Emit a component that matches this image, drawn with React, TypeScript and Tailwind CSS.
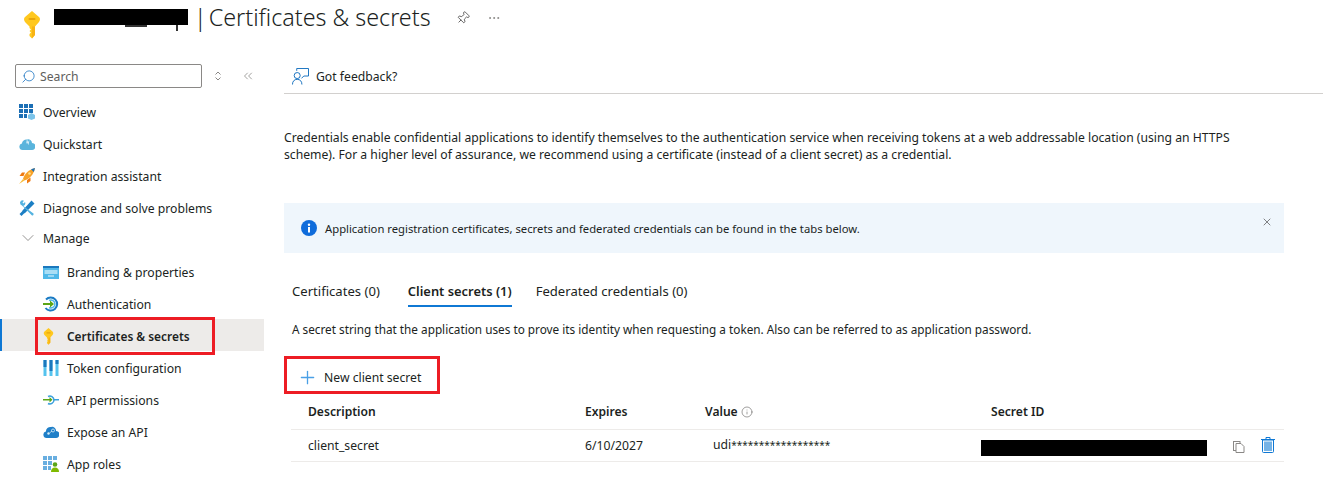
import { ChevronDown, ChevronsLeft, Ellipsis, Info, Pin, Plus, Search, X } from "lucide-react";
import type { ReactNode } from "react";

const KeyIcon = ({ className }: { className?: string }) => (
    <svg viewBox="0 0 18 28" className={className}>
        <path d="M9 0 L16 6 Q18 8 16 11 L12 15.5 V24 L9 27.5 L6.5 25 V23 L8 21.5 L6.5 20 L8 18.5 L6.5 17 V15.5 L2 11 Q0 8 2 6 Z" fill="#ffc81f" />
        <path d="M12 15.500V24L9 27.500V15.500Z" fill="#f5a90f" opacity="0.7" />
        <rect x="5.500" y="7" width="7" height="2" rx="1" fill="#e8a50c" />
    </svg>
);

const GridIcon = () => (
    <svg viewBox="0 0 16 16" className="w-4 h-4">
        <path d="M0 0h4v4H0zM5 0h4v4H5zM10 0h4v4h-4zM0 5h4v4H0zM5 5h4v4H5zM10 5h4v4h-4zM0 10h4v4H0zM5 10h3v4H5z" fill="#1c6fb5" />
        <path d="M9 11l3.500-2 3.500 2v3.500L12.500 16 9 14.500z" fill="#7cc4ea" />
    </svg>
);

const CloudIcon = () => (
    <svg viewBox="0 0 16 12" className="w-4 h-3">
        <path d="M3.500 12a3.300 3.300 0 0 1-.6-6.500A4.600 4.600 0 0 1 8 1.500 3.800 3.800 0 0 1 13 5a3.500 3.500 0 0 1-.3 7z" fill="#5ab4dc" />
        <path d="M8 1l1 3 1.500-2-1 5-1.500-2.500L7 6z" fill="#d8eef8" />
    </svg>
);

const RocketIcon = () => (
    <svg viewBox="0 0 16 16" className="w-4 h-4">
        <path d="M4 11C5 6 10 1.500 16 0 15 6 10.500 11 5.500 12.500z" fill="#f7a128" />
        <path d="M12 1.200L16 0 14.800 4z" fill="#1b6fb8" />
        <circle cx="10.500" cy="5.500" r="1.300" fill="#ffe08a" />
        <path d="M6 4.500H3L.5 8h4zM11.500 9.500V13L8 15.500V12z" fill="#ef7a12" />
        <path d="M4 11l1.500 1.500L0 16z" fill="#f9bd3c" />
    </svg>
);

const ToolsIcon = () => (
    <svg viewBox="0 0 16 16" className="w-4 h-4">
        <path d="M12.500 0.500l3 3-9.500 9.500-1 .5L2.500 16 .5 14l2.500-2.500.5-1z" fill="#1c7fc4" />
        <path d="M1 2.500a3 3 0 0 1 4-1.800L3.500 2.500l1 1L6 2a3 3 0 0 1-1.800 4L14.500 13.500a1.500 1.500 0 0 1-1.500 2L3 5.500a3 3 0 0 1-2-3z" fill="#55b3e0" />
    </svg>
);

const BrandingIcon = () => (
    <svg viewBox="0 0 16 13" className="w-4 h-[13px]">
        <rect width="16" height="13" fill="#50b8e8" />
        <rect width="16" height="2" fill="#1b78bd" />
        <rect x="1.500" y="4" width="13" height="4" fill="#a9def5" />
        <rect x="5" y="9.500" width="6" height="1" fill="#e6f6fc" />
    </svg>
);

const AuthIcon = () => (
    <svg viewBox="0 0 16 16" className="w-4 h-4">
        <path d="M3 3.500A6.500 6.500 0 1 1 2.500 12" fill="none" stroke="#1b7bc4" strokeWidth="2" />
        <path d="M6 4.500A4 4 0 1 1 6 11.500" fill="none" stroke="#50b8e8" strokeWidth="1.500" />
        <path d="M0 7h7V4.500L11 8l-4 3.500V9H0z" fill="#5ba517" />
    </svg>
);

const TokenIcon = () => (
    <svg viewBox="0 0 16 16" className="w-4 h-4">
        <rect x="0.500" y="0" width="3" height="16" fill="#55c3ee" />
        <rect x="0.500" y="0" width="3" height="7" fill="#1b78bd" />
        <rect x="6.500" y="0" width="3" height="16" fill="#55c3ee" />
        <rect x="6.500" y="0" width="3" height="11" fill="#1b78bd" />
        <rect x="12.500" y="0" width="3" height="16" fill="#55c3ee" />
        <rect x="12.500" y="0" width="3" height="4" fill="#1b78bd" />
    </svg>
);

const PermissionIcon = () => (
    <svg viewBox="0 0 16 10" className="w-4 h-2.5">
        <rect x="11" y="4" width="5" height="1.500" fill="#3aa0dc" />
        <path d="M5 1.500A4 4 0 1 1 5 8.500" fill="none" stroke="#3aa0dc" strokeWidth="1.500" />
        <rect x="0" y="4" width="8" height="1.500" fill="#5ba517" />
        <path d="M6.500 2l3 2.750-3 2.750z" fill="#5ba517" />
    </svg>
);

const ExposeIcon = () => (
    <svg viewBox="0 0 16 12" className="w-4 h-3">
        <path d="M3.500 12a3.300 3.300 0 0 1-.6-6.500A4.600 4.600 0 0 1 8 1 3.800 3.800 0 0 1 13 5a3.500 3.500 0 0 1-.3 7z" fill="#1f7fc8" />
        <circle cx="5.500" cy="7.500" r="1.200" fill="#d8eef8" />
        <circle cx="10" cy="4.500" r="1.500" fill="none" stroke="#d8eef8" strokeWidth="0.800" />
        <path d="M6.500 7l2.500-2" stroke="#d8eef8" strokeWidth="0.700" />
    </svg>
);

const RolesIcon = () => (
    <svg viewBox="0 0 16 16" className="w-4 h-4">
        <path d="M0 0h4v4H0zM5 0h4v4H5zM10 0h4v4h-4zM0 5h4v4H0zM5 5h4v4H5zM0 10h4v4H0zM5 10h3v4H5z" fill="#69aee0" />
        <circle cx="12" cy="8.500" r="2.300" fill="#5ba517" />
        <path d="M8 16c0-3 1.500-4.500 4-4.500s4 1.500 4 4.500z" fill="#7fba00" />
    </svg>
);

const FeedbackIcon = () => (
    <svg viewBox="0 0 18 18" className="w-[17px] h-[17px]" fill="none" stroke="#0f6cbd" strokeWidth="1">
        <circle cx="5.500" cy="8" r="3.200" />
        <path d="M.5 17.500c0-3.500 2-5.500 5-5.500s5 2 5 5.500" />
        <path d="M5 3V.5h12.500v8h-5l-2.500 2.500" />
    </svg>
);

const SortIcon = () => (
    <svg viewBox="0 0 12 12" className="w-3 h-3" fill="none" stroke="#8a8886" strokeWidth="1">
        <path d="M3.500 4.500L6 2l2.500 2.500M3.500 7.500L6 10l2.500-2.500" />
    </svg>
);

const CopyIcon = () => (
    <svg viewBox="0 0 12 12" className="w-3 h-3" fill="#fff" stroke="#8a8886" strokeWidth="1">
        <rect x="0.500" y="0.500" width="6.500" height="9" />
        <path d="M3 2.500h5l3 3v6H3z" />
    </svg>
);

const TrashIcon = () => (
    <svg viewBox="0 0 14 16" className="w-[14px] h-4">
        <path d="M1.500 3h11v11.500a1 1 0 0 1-1 1h-9a1 1 0 0 1-1-1z" fill="#fff" stroke="#0f78d4" />
        <rect x="3" y="4.500" width="8" height="9.500" fill="#76b3e6" />
        <path d="M0 2.500h14M5 2.500V.5h4v2" fill="none" stroke="#0f78d4" />
    </svg>
);

type NavItem = { label: string; icon: ReactNode };

const topItems: NavItem[] = [
    { label: "Overview", icon: <GridIcon /> },
    { label: "Quickstart", icon: <CloudIcon /> },
    { label: "Integration assistant", icon: <RocketIcon /> },
    { label: "Diagnose and solve problems", icon: <ToolsIcon /> },
];

const manageItems: NavItem[] = [
    { label: "Branding & properties", icon: <BrandingIcon /> },
    { label: "Authentication", icon: <AuthIcon /> },
    { label: "Certificates & secrets", icon: <KeyIcon className="w-[11px] h-[17px]" /> },
    { label: "Token configuration", icon: <TokenIcon /> },
    { label: "API permissions", icon: <PermissionIcon /> },
    { label: "Expose an API", icon: <ExposeIcon /> },
    { label: "App roles", icon: <RolesIcon /> },
];

function Sidebar() {
    return (
        <aside className="w-[264px] shrink-0">
            <div className="flex items-center h-6 pl-[15px] mb-2">
                <div className="w-[187px] h-6 flex items-center gap-1 pl-[5px] border border-[#8a8886] rounded-[2px] text-[#605e5c]">
                    <Search className="w-[15px] h-[15px] text-[#0f6cbd] -scale-x-100" strokeWidth={1.2} />
                    <span>Search</span>
                </div>
                <span className="ml-[10px]"><SortIcon /></span>
                <ChevronsLeft className="w-[14px] h-[14px] ml-[17px] text-[#605e5c]" strokeWidth={1} />
            </div>
            {topItems.map((item) => (
                <div key={item.label} className="h-8 flex items-center pl-[19px]">
                    <span className="w-6 flex justify-start">{item.icon}</span>
                    <span>{item.label}</span>
                </div>
            ))}
            <div className="h-7 flex items-center pl-[19px] mb-1">
                <span className="w-6 flex justify-start">
                    <ChevronDown className="w-5 h-5 -ml-[1px] text-[#605e5c]" strokeWidth={0.8} />
                </span>
                <span>Manage</span>
            </div>
            {manageItems.map((item) => {
                const selected = item.label === "Certificates & secrets";
                return (
                    <div
                        key={item.label}
                        className={
                            selected
                                ? "relative h-8 -mt-px mb-px pt-0.5 flex items-center pl-[41px] bg-[#edebe9] border-l-2 border-[#0f78d4] font-semibold text-[11.900px]"
                                : "h-8 flex items-center pl-[43px]"
                        }
                    >
                        <span className="w-6 flex">{item.icon}</span>
                        <span>{item.label}</span>
                        {selected && (
                            <div className="absolute left-[33px] top-[-2px] w-[180px] h-[38px] border-[3px] border-[#ed1c24]" />
                        )}
                    </div>
                );
            })}
        </aside>
    );
}

function Tabs() {
    return (
        <div className="flex h-[37px] pl-2 mt-[21px] text-[13.100px]">
            <div className="pt-[9px]">Certificates (0)</div>
            <div className="pt-[9px] ml-7 font-semibold text-[12.900px] border-b-2 border-[#0f78d4] h-[33px]">Client secrets (1)</div>
            <div className="pt-[9px] ml-6">Federated credentials (0)</div>
        </div>
    );
}

function SecretsTable() {
    return (
        <div className="ml-[7px] w-[993px]">
            <div className="h-9 flex items-center border-b border-[#edebe9] font-semibold text-[12.100px] pl-[17px]">
                <div className="w-[277px]">Description</div>
                <div className="w-[120px]">Expires</div>
                <div className="w-[286px] flex items-center gap-[3px]">
                    Value
                    <Info className="w-3 h-3 text-[#605e5c]" strokeWidth={1.2} />
                </div>
                <div>Secret ID</div>
            </div>
            <div className="h-8 flex items-center border-b border-[#edebe9] pl-[17px]">
                <div className="w-[277px]">client_secret</div>
                <div className="w-[120px]">6/10/2027</div>
                <div className="w-[276px] pl-2 -mt-0.5">udi<span className="text-[10px]">******************</span></div>
                <div className="w-[226px] h-4 mt-1 bg-black" />
                <div className="ml-[26px] mt-0.5"><CopyIcon /></div>
                <div className="ml-[16px] -mt-0.5"><TrashIcon /></div>
            </div>
        </div>
    );
}

export default function App() {
    return (
        <div className="w-[1323px] h-[482px] overflow-hidden bg-white text-[12.200px] leading-[17px] text-[#201f1e] font-['Noto_Sans','Open_Sans',sans-serif]">
            <header className="h-16 flex items-start">
                <KeyIcon className="w-[18px] h-7 ml-[23px] mt-[11px]" />
                <div className="ml-[13px] mt-[-1px] flex items-center text-[23.300px] leading-9 font-light">
                    <div className="relative w-[134px] h-4 bg-black">
                        <div className="absolute left-[71px] top-4 w-[22px] h-0.5 bg-[#333]" />
                        <div className="absolute left-[122px] top-4 w-0.5 h-1.5 bg-[#333]" />
                    </div>
                    <span className="ml-[6px]">|</span>
                    <span className="ml-[2px]">Certificates &amp; secrets</span>
                </div>
                <Pin className="w-[14px] h-[14px] ml-[25px] mt-[11px] rotate-45 text-[#323130]" strokeWidth={1.2} />
                <Ellipsis className="w-[14px] h-[14px] ml-[17px] mt-[11px] text-[#605e5c]" strokeWidth={1} />
            </header>
            <div className="flex">
                <Sidebar />
                <main className="flex-1 pl-5 min-w-0">
                    <div className="h-[30px] flex items-center gap-[7px] pl-2 pb-1 border-b border-[#d2d0ce]">
                        <FeedbackIcon />
                        <span>Got feedback?</span>
                    </div>
                    <p className="w-[990px] mt-[35px]">
                        Credentials enable confidential applications to identify themselves to the authentication service when receiving tokens at a web addressable location (using an HTTPS scheme). For a higher level of assurance, we recommend using a certificate (instead of a client secret) as a credential.
                    </p>
                    <div className="w-[1000px] h-[50px] mt-10 bg-[#eff6fc] flex items-center pl-[17px] pr-[11px] text-[11.270px]">
                        <svg viewBox="0 0 16 16" className="w-4 h-4 mr-2 shrink-0">
                            <circle cx="8" cy="8" r="8" fill="#0f6cdb" />
                            <rect x="7" y="7" width="2" height="5.500" fill="#fff" />
                            <circle cx="8" cy="4.700" r="1.200" fill="#fff" />
                        </svg>
                        <span className="flex-1">Application registration certificates, secrets and federated credentials can be found in the tabs below.</span>
                        <X className="w-3 h-3 text-[#323130] -mt-3" strokeWidth={1.2} />
                    </div>
                    <Tabs />
                    <p className="ml-2 mt-[10px] text-[11.780px]">A secret string that the application uses to prove its identity when requesting a token. Also can be referred to as application password.</p>
                    <div className="w-[156px] h-[38px] mt-[18px] pt-1 border-[3px] border-[#ed1c24] flex items-center pl-[10px] gap-[6px]">
                        <Plus className="w-[21px] h-[21px] text-[#4aa0e6]" strokeWidth={1.5} />
                        <span>New client secret</span>
                    </div>
                    <SecretsTable />
                </main>
            </div>
        </div>
    );
}
